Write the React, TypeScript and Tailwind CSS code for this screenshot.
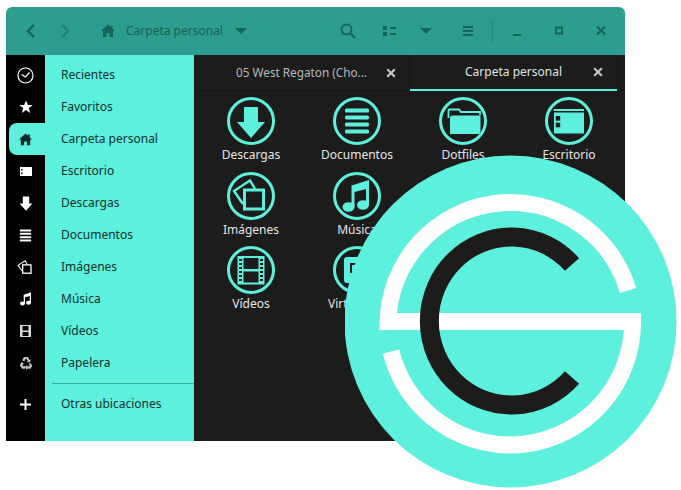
import type { ReactNode } from 'react'

const PLACES = [
  'Recientes',
  'Favoritos',
  'Carpeta personal',
  'Escritorio',
  'Descargas',
  'Documentos',
  'Imágenes',
  'Música',
  'Vídeos',
  'Papelera',
]

function Download() {
  return <polygon points="17,10 31,10 31,25 38,25 24,41 10,25 17,25" fill="currentColor" />
}

function Lines() {
  return (
    <g fill="currentColor">
      <rect x="12" y="11.5" width="24" height="4" rx="1.5" />
      <rect x="12" y="18.5" width="24" height="4" rx="1.5" />
      <rect x="12" y="25.5" width="24" height="4" rx="1.5" />
      <rect x="12" y="32.5" width="24" height="4" rx="1.5" />
    </g>
  )
}

function Picture() {
  return (
    <g fill="none" stroke="currentColor" strokeWidth="3">
      <rect x="17.5" y="18" width="19" height="19" />
      <path d="M16 32 L7 19 L23 8.5 L28 17" strokeWidth="2.4" />
    </g>
  )
}

function Note() {
  return (
    <g fill="currentColor">
      <ellipse cx="15.5" cy="35" rx="6" ry="4.8" />
      <ellipse cx="30" cy="33" rx="6" ry="4.8" />
      <path d="M18.5 35 V13.5 L36 8 V33 H33 V17 L21.5 20 V35 Z M21.5 16 L33 12.8 V14 L21.5 17 Z" />
    </g>
  )
}

function Folder() {
  return (
    <g>
      <path d="M9.5 21 V13.5 Q9.500 12.500 10.500 12.500 H20 L22 15 H41 V18" fill="none" stroke="currentColor" strokeWidth="1.8" />
      <path d="M11 37 V21 Q11 18.500 13.500 18.500 H41.500 V35 Q41.500 37 39.500 37 Z" fill="currentColor" />
    </g>
  )
}

function Desk() {
  return (
    <g>
      <rect x="9" y="12" width="30" height="2" fill="currentColor" />
      <rect x="9" y="15.5" width="30" height="21" fill="currentColor" />
      <rect x="10.8" y="19" width="4.4" height="4.6" fill="#1c1c1c" />
      <rect x="10.8" y="25.7" width="4.4" height="4.6" fill="#1c1c1c" />
    </g>
  )
}

function Film() {
  return (
    <g>
      <path fillRule="evenodd" d="M10.5 10 H37.5 V38.5 H10.5 Z M16.5 12 V23 H31.5 V12 Z M16.5 25.5 V36.5 H31.5 V25.5 Z" fill="currentColor" />
      <g fill="#1c1c1c">
        <rect x="12" y="13" width="3" height="2" />
        <rect x="12" y="17" width="3" height="2" />
        <rect x="12" y="21" width="3" height="2" />
        <rect x="12" y="25" width="3" height="2" />
        <rect x="12" y="29" width="3" height="2" />
        <rect x="12" y="33" width="3" height="2" />
        <rect x="33" y="13" width="3" height="2" />
        <rect x="33" y="17" width="3" height="2" />
        <rect x="33" y="21" width="3" height="2" />
        <rect x="33" y="25" width="3" height="2" />
        <rect x="33" y="29" width="3" height="2" />
        <rect x="33" y="33" width="3" height="2" />
      </g>
    </g>
  )
}

function Virtual() {
  return (
    <g>
      <rect x="11" y="11" width="26" height="26" rx="3" fill="currentColor" />
      <path d="M18 27 V18 H32" fill="none" stroke="#1c1c1c" strokeWidth="2" />
    </g>
  )
}

function Home() {
  return <path d="M8 1.500 L1 8 H3 V14 H6.500 V10 H9.500 V14 H13 V8 H15 L12.500 5.700 V2.500 H10.800 V4.100 Z" fill="currentColor" />
}

function RailGlyph({ children, size }: { children: ReactNode; size: number }) {
  return (
    <svg width={size} height={size} viewBox="0 0 48 48">
      {children}
    </svg>
  )
}

function RailIcons() {
  return (
    <div className="w-[39px] shrink-0 bg-black pt-[4px] text-white">
      <div className="flex h-8 items-center justify-center">
        <svg width="17" height="17" viewBox="0 0 17 17" fill="none" stroke="currentColor" strokeWidth="1.2">
          <circle cx="8.500" cy="8.500" r="7.500" />
          <path d="M4.500 7.500 L8.500 10 L12.500 5.500" />
        </svg>
      </div>
      <div className="flex h-8 items-center justify-center">
        <svg width="14" height="14" viewBox="0 0 14 14">
          <path d="M7 .5 L8.900 5 H13.700 L9.800 8 L11.200 13 L7 10.100 L2.800 13 L4.200 8 L.3 5 H5.100 Z" fill="currentColor" />
        </svg>
      </div>
      <div className="ml-[3px] flex h-8 items-center justify-center rounded-l-lg bg-[#5cf0dd] pr-[3px] text-[#102a26]">
        <svg width="15" height="15" viewBox="0 0 16 16">
          <Home />
        </svg>
      </div>
      <div className="flex h-8 items-center justify-center">
        <svg width="12" height="9" viewBox="0 0 12 9">
          <rect width="12" height="9" fill="currentColor" />
          <rect x="1" y="2" width="1.500" height="1.500" fill="#000" />
          <rect x="1" y="5.500" width="1.500" height="1.500" fill="#000" />
        </svg>
      </div>
      <div className="flex h-8 items-center justify-center">
        <RailGlyph size={22}>
          <Download />
        </RailGlyph>
      </div>
      <div className="flex h-8 items-center justify-center">
        <RailGlyph size={23}>
          <Lines />
        </RailGlyph>
      </div>
      <div className="flex h-8 items-center justify-center">
        <RailGlyph size={21}>
          <Picture />
        </RailGlyph>
      </div>
      <div className="flex h-8 items-center justify-center">
        <RailGlyph size={20}>
          <Note />
        </RailGlyph>
      </div>
      <div className="flex h-8 items-center justify-center">
        <svg width="11" height="12" viewBox="0 0 11 12" opacity="0.85">
          <path fillRule="evenodd" d="M0 0 H11 V12 H0 Z M2.500 1 V5.500 H8.500 V1 Z M2.500 7 V11 H8.500 V7 Z" fill="currentColor" />
        </svg>
      </div>
      <div className="flex h-8 items-center justify-center">
        <svg width="14" height="14" viewBox="0 0 14 14" fill="currentColor" opacity="0.75">
          <path d="M5 1 H9 L10.500 4 L12 3.200 L10.800 6.600 L7.600 6 L8.800 5 L7 2.600 L5.200 5.400 L3.200 4.200 Z" />
          <path d="M2.400 6 L4.800 7.200 L3.400 10 H6 V12.800 H3 L.8 9.400 Z" />
          <path d="M11.400 7 L13.400 9.800 L11.400 12.800 H8 V14 L5.800 11.200 L8 8.800 V10.200 H10.800 L9.800 8 Z" />
        </svg>
      </div>
      <div className="mt-[9px] flex h-8 items-center justify-center">
        <svg width="11" height="11" viewBox="0 0 11 11">
          <path d="M4.500 0 H6.500 V4.500 H11 V6.500 H6.500 V11 H4.500 V6.500 H0 V4.500 H4.500 Z" fill="currentColor" />
        </svg>
      </div>
    </div>
  )
}

function Sidebar() {
  return (
    <div className="w-[149px] shrink-0 bg-[#5cf0dd] pt-[4px] text-[#12302c]">
      {PLACES.map((place) => (
        <div key={place} className="flex h-8 items-center pl-4">
          {place}
        </div>
      ))}
      <div className="ml-[7px] mt-[4px] h-px bg-[#3fa99b]" />
      <div className="flex h-[40px] items-center pl-4">Otras ubicaciones</div>
    </div>
  )
}

function Item({ label, children }: { label: string; children: ReactNode }) {
  return (
    <div className="flex h-[74.5px] flex-col items-center">
      <svg width="48" height="48" viewBox="0 0 48 48" className="text-[#5cf0dd]">
        <circle cx="24" cy="24" r="22.500" fill="none" stroke="currentColor" strokeWidth="3" />
        {children}
      </svg>
      <span className="mt-[1px] leading-[18px] text-[#e4e6e6]">{label}</span>
    </div>
  )
}

function Tab({ label, active, className }: { label: string; active?: boolean; className: string }) {
  return (
    <div className={`flex h-[36px] items-center justify-end ${className}`}>
      <span className={active ? 'mr-[31px] text-[#dfe4e4]' : 'mr-[19px] text-[11.75px] text-[#b5b8b8]'}>{label}</span>
      <svg width="10" height="10" viewBox="0 0 10 10" className="mr-[14px] text-[#c4c6c6]">
        <path d="M1.200 1.200 L8.800 8.800 M8.800 1.200 L1.200 8.800" stroke="currentColor" strokeWidth="2.200" />
      </svg>
    </div>
  )
}

function Logo() {
  return (
    <svg width="332" height="334" viewBox="345 155 332 334" className="absolute left-[345px] top-[155px]">
      <circle cx="510.500" cy="321.500" r="166" fill="#5cf0dd" />
      <path
        d="M628 290.500 A122.500 122.500 0 0 0 388 321.500 H632.500 A122.500 122.500 0 0 1 391 351.500"
        fill="none"
        stroke="#ffffff"
        strokeWidth="17"
      />
      <path d="M572 264.500 A82 84 0 1 0 572 377.500" fill="none" stroke="#1c1c1c" strokeWidth="19" />
    </svg>
  )
}

export default function App() {
  return (
    <div className="relative h-[490px] w-[681px] overflow-hidden bg-white font-['Noto_Sans',sans-serif] text-[12px]">
      <div className="ml-[6px] mt-[7px] flex h-[434px] w-[619px] flex-col">
        <div className="flex h-[48px] shrink-0 items-center rounded-t-md bg-[#2d9d8f] text-[#17655a]">
          <svg width="42" height="16" viewBox="0 0 42 16" fill="none" stroke="currentColor" strokeWidth="2.400">
            <path d="M28 2 L22 8 L28 14" />
          </svg>
          <svg width="34" height="16" viewBox="0 0 34 16" fill="none" stroke="currentColor" strokeWidth="2.400" opacity="0.5">
            <path d="M14 2 L20 8 L14 14" />
          </svg>
          <svg width="16" height="16" viewBox="0 0 16 16" className="ml-[18px]">
            <Home />
          </svg>
          <span className="ml-[10px] w-[97px] whitespace-nowrap text-[#1c5f55]">Carpeta personal</span>
          <svg width="12" height="6" viewBox="0 0 12 6" className="ml-[12px]">
            <path d="M0 0 H12 L6 6 Z" fill="currentColor" />
          </svg>
          <svg width="16" height="16" viewBox="0 0 16 16" className="ml-[93px]" fill="none" stroke="currentColor" strokeWidth="2">
            <circle cx="6.500" cy="6.500" r="5" />
            <path d="M10 10 L15 15" strokeWidth="2.400" />
          </svg>
          <svg width="16" height="12" viewBox="0 0 16 12" className="ml-[26px]">
            <path d="M1 1 H5 V5 H1 Z M1 7 H5 V11 H1 Z M8 2 H14 V4 H8 Z M8 8 H14 V10 H8 Z" fill="currentColor" />
          </svg>
          <svg width="12" height="6" viewBox="0 0 12 6" className="ml-[22px]">
            <path d="M0 0 H12 L6 6 Z" fill="currentColor" />
          </svg>
          <svg width="16" height="12" viewBox="0 0 16 12" className="ml-[28px]">
            <path d="M3 1 H13 V3 H3 Z M3 5 H13 V7 H3 Z M3 9 H13 V11 H3 Z" fill="currentColor" />
          </svg>
          <div className="ml-[16px] h-[24px] w-px bg-[#25877b]" />
          <svg width="16" height="16" viewBox="0 0 16 16" className="ml-[16px]">
            <rect x="4" y="11" width="8" height="2" fill="currentColor" />
          </svg>
          <svg width="16" height="16" viewBox="0 0 16 16" className="ml-[26px]" fill="none" stroke="currentColor" strokeWidth="2">
            <rect x="5" y="4.500" width="6" height="6" />
          </svg>
          <svg width="16" height="16" viewBox="0 0 16 16" className="ml-[26px]" fill="none" stroke="currentColor" strokeWidth="2.200">
            <path d="M4 3.500 L12 11.500 M12 3.500 L4 11.500" />
          </svg>
        </div>

        <div className="flex min-h-0 flex-1">
          <RailIcons />
          <Sidebar />
          <div className="flex min-w-0 flex-1 flex-col bg-[#1c1c1c]">
            <div className="flex h-[36px] shrink-0 border-b border-[#151515]">
              <Tab label="05 West Regaton (Cho..." className="w-[216px]" />
              <div className="h-[36px] w-[207px] shadow-[-1px_0_0_#141414,1px_0_0_#141414]">
                <Tab label="Carpeta personal" active className="border-b-2 border-[#5cf0dd]" />
              </div>
            </div>
            <div className="grid grid-cols-[106px_106px_106px_106px] pl-[4px] pt-[6px]">
              <Item label="Descargas"><Download /></Item>
              <Item label="Documentos"><Lines /></Item>
              <Item label="Dotfiles"><Folder /></Item>
              <Item label="Escritorio"><Desk /></Item>
              <Item label="Imágenes"><Picture /></Item>
              <Item label="Música"><Note /></Item>
              <div />
              <div />
              <Item label="Vídeos"><Film /></Item>
              <Item label="VirtualBox"><Virtual /></Item>
            </div>
          </div>
        </div>
      </div>
      <Logo />
    </div>
  )
}
